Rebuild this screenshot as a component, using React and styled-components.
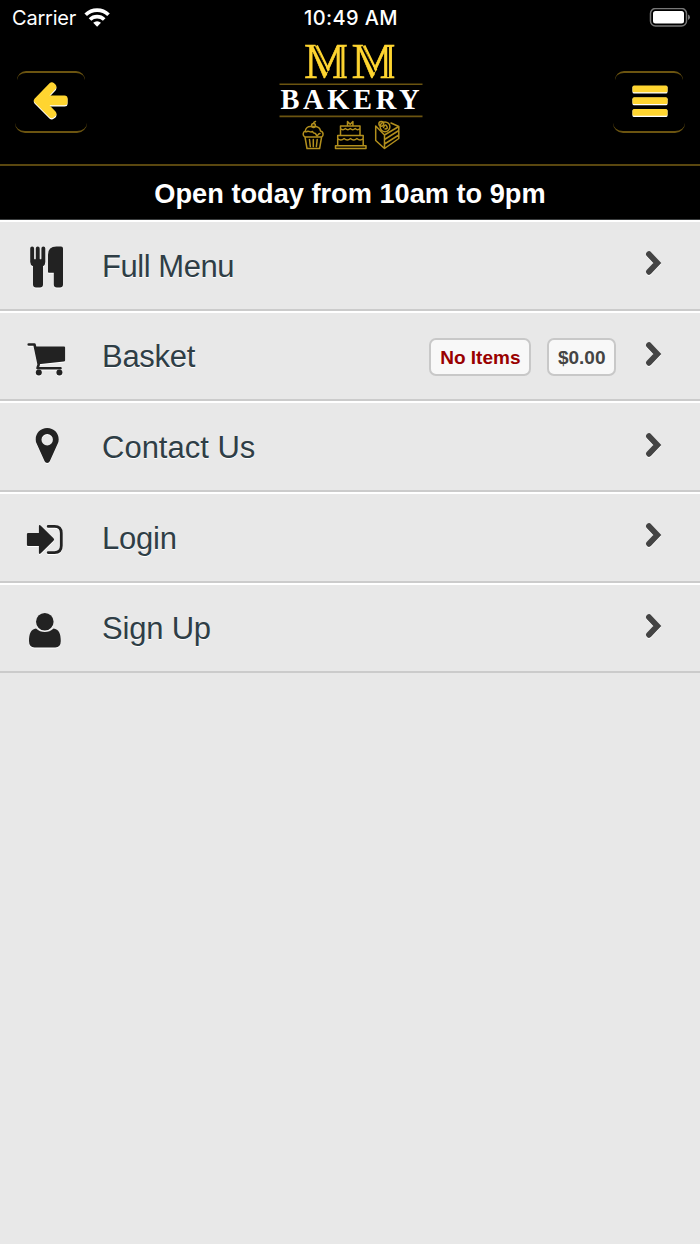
import React from 'react';
import styled, { createGlobalStyle } from 'styled-components';

const gold = '#ffd530';
const goldDark = '#6b5410';
const ink = '#222222';

const GlobalStyle = createGlobalStyle`
    body {
        margin: 0;
        background: #e8e8e8;
        font-family: "Liberation Sans", Arial, sans-serif;
    }
`;

const Page = styled.div`
    display: flex;
    flex-direction: column;
    min-height: 1244px;
    background: #e8e8e8;
`;

const StatusBar = styled.div`
    display: grid;
    grid-template-columns: 1fr auto 1fr;
    align-items: center;
    height: 36px;
    padding: 0 10px 0 12px;
    background: #000;
    color: #fff;
    font-family: Inter, sans-serif;
    font-size: 20px;
    line-height: 36px;
`;

const Carrier = styled.div`
    display: flex;
    align-items: center;
    gap: 8px;
    letter-spacing: -0.2px;
`;

const Clock = styled.div`
    font-weight: 500;
    letter-spacing: 0.4px;
`;

const Battery = styled.svg`
    justify-self: end;
`;

const Header = styled.header`
    display: flex;
    justify-content: space-between;
    box-sizing: border-box;
    height: 130px;
    padding: 0 15px;
    background: #000;
    border-bottom: 2px solid #5a470f;
`;

const HeaderButton = styled.button`
    position: relative;
    display: flex;
    align-items: center;
    justify-content: center;
    box-sizing: border-box;
    width: 72px;
    height: 62px;
    margin: 35px 0 0;
    padding: 0;
    background: transparent;
    border: 0 solid transparent;
    border-bottom: 2px solid ${goldDark};
    border-radius: 10px;

    &::before {
        content: '';
        position: absolute;
        top: 0;
        left: 2px;
        right: 2px;
        height: 16px;
        border-top: 2px solid ${goldDark};
        border-radius: 9px;
    }
`;

const Logo = styled.svg`
    display: block;
    margin-top: -8px;
`;

const Hours = styled.div`
    height: 54px;
    background: #000;
    border-bottom: 1px solid #3a3d3e;
    box-sizing: border-box;
    color: #fff;
    font-size: 27.2px;
    font-weight: bold;
    line-height: 55px;
    text-align: center;
`;

const Menu = styled.nav`
    display: flex;
    flex-direction: column;
`;

const Row = styled.a`
    display: flex;
    align-items: center;
    box-sizing: border-box;
    height: 90.67px;
    padding-right: 31px;
    border-top: 2px solid #fff;
    border-bottom: 2px solid #cbcbcb;
    color: #2f3e46;
    text-decoration: none;
`;

const RowIcon = styled.svg`
    flex: none;
    width: 48px;
    height: 52px;
    margin: 2px 32px 0 22px;
    fill: ${ink};
    filter: drop-shadow(0 1px 0 #fff);
`;

const Label = styled.span`
    flex: 1;
    font-size: 31px;
    line-height: 40px;
    padding-top: 3px;
    letter-spacing: ${props => props.$spacing || 0}px;
    text-shadow: 0 1px 0 #fff;
`;

const Badge = styled.span`
    box-sizing: border-box;
    height: 38px;
    margin: 2px 0 0 16px;
    padding: 0 ${props => props.$pad}px;
    background: #f8f8f8;
    border: 2px solid #c8c8c8;
    border-radius: 7px;
    color: ${props => props.$color};
    font-size: 19px;
    font-weight: bold;
    line-height: 35px;
`;

const Chevron = styled.svg`
    flex: none;
    margin: 0 6px 4px 29px;
    filter: drop-shadow(0 1px 0 #fff);
`;

const icons = {
  food: (
    <>
      <path d="M8.200 8.400q0-1.800 1.950-1.800t1.950 1.800v10q0 .9.850.9t.850-.9v-10q0-1.800 1.950-1.800t1.950 1.800v10q0 .9.850.9t.850-.9v-10q0-1.800 1.950-1.800t1.950 1.800v13.500q0 3-2.300 4.400v18.100q0 3-3 3h-4q-3 0-3-3V26.300q-2.800-1.400-2.800-4.400z" />
      <path d="M26 14.800q0-8.200 8.500-8.200h4.500q2 0 2 1.800v36q0 3-3 3h-3.200q-3 0-3-3V32.800h-5q-.8 0-.8-1z" />
    </>
  ),
  cart: (
    <>
      <path d="M6.700 13.500H12.500L16.700 33.500 15.500 37.200H38.500" fill="none" stroke={ink} strokeWidth="2.600" strokeLinecap="round" strokeLinejoin="round" />
      <path d="M12.500 15.500H42q1.100 0 1.100 1.100v12.600q0 1.200-1.200 1.300L16.500 33.300z" />
      <circle cx="16.800" cy="41.400" r="3" />
      <circle cx="37.400" cy="41.400" r="3" />
    </>
  ),
  pin: (
    <path fillRule="evenodd" d="M25.200 6C18.500 6 13.700 11 13.700 17.400q0 2.200.9 4.200l8 17.700q.8 1.700 2.600 1.700t2.600-1.700l8-17.700q.9-2 .9-4.200C36.700 11 31.900 6 25.200 6zm0 6.100a5.700 5.700 0 1 1 0 11.400 5.700 5.700 0 0 1 0-11.400z" />
  ),
  login: (
    <>
      <path d="M6.200 21H16.900V14.600q0-2.500 1.900-.8L31.500 26.200q1.300 1.300 0 2.600L18.800 41.200q-1.900 1.800-1.900-.7V34H6.200q-1.300 0-1.300-1.300V22.300q0-1.300 1.300-1.300z" />
      <path d="M26.200 14.400H32.500q6.800 0 6.800 6.800V33.800q0 6.800-6.800 6.800h-6.300" fill="none" stroke={ink} strokeWidth="2.800" strokeLinecap="round" />
    </>
  ),
  user: (
    <>
      <circle cx="22.800" cy="18.800" r="8.800" />
      <path d="M14 25.600q3.800 3.500 8.800 3.500t8.800-3.500c5.200.5 7.200 5.300 7.200 12.500q0 6.300-5.500 6.300H12.500Q7 44.400 7 38.100c0-7.200 2-12 7-12.500z" />
    </>
  ),
};

const backArrow = 'M3.500 19.800 18.500 4.200q2.400-2.100 4.600 0l1.400 1.300q1.900 2.300 0 4.600L18.500 16.500H33.500q3 0 3 2.500v4.800q0 2.500-3 2.500H18.500L24.500 32.500q2 2.300 0 4.600l-1.500 1.200q-2.300 1.800-4.600 0L3.500 23.300q-1.700-1.700 0-3.500z';

const Initial = ({ x }) => (
  <g transform={`translate(${x} 0)`}>
    <text x="0" y="41.500" fill={gold} stroke={gold} strokeWidth="0.600" fontFamily="Liberation Serif, serif" fontSize="51" textLength="44" lengthAdjust="spacingAndGlyphs">M</text>
    <g fill="none">
      <path d="M7.500 9.400 22.300 39.500M12.800 9.400 24.800 34.500M33.800 10V41M39.300 10V41" stroke={gold} strokeWidth="2.300" />
      {/* engraved lines inside the thick strokes */}
      <path d="M10.200 10.400 23 36M36.600 11V41" stroke="#000" strokeWidth="1.700" />
    </g>
  </g>
);

const BakeryLogo = () => (
  <Logo width="160" height="134" viewBox="0 -8 160 134">
    <Initial x={34} />
    <Initial x={81.500} />
    <path d="M9.500 48.200H152.500M9.500 80.400H152.500" stroke={goldDark} strokeWidth="1.600" />
    <text x="10.500" y="73.200" fill="#fff" fontFamily="Liberation Serif, serif" fontWeight="bold" fontSize="28.500" textLength="139">BAKERY</text>
    <g stroke="#b28f1d" strokeWidth="1.500" fill="none" strokeLinejoin="round" strokeLinecap="round">
      <path d="M35 101 37 112.500h12.600L51.600 101M39.500 103.500l.8 7M43.300 103.500v7M47.200 103.500l-.8 7M35 101c-2.500-1-2.500-5 .3-6 .3-3 3-4.500 5-4.500h5.500c3 .5 4.500 2.500 4.700 4.500 3.500 1 3 5 1.100 6zM35 101H51.600M36 96c3-2 4 1 6.500-.5 1.500 3.500 3 .5 3.500 3 1.500 2.500 2-1 4-1" />
      <circle cx="43.500" cy="89.500" r="1.900" />
      <path d="M43.500 87.600q0-1.700 2-2" />
      <path d="M65.500 109.800h30.500v2.700h-30.500zM67.700 109.500V99.500h25.500v10M70.500 99.500v-9.500h19.500v9.500M70.500 92.500q2.400 2.500 4.900 0 2.400 2.500 4.900 0 2.400 2.500 4.900 0 2.400 2.500 4.800 0M67.700 102.500q3.200 3 6.400 0 3.200 3 6.400 0 3.200 3 6.400 0 3.200 3 6.300 0M77.500 89.500v-4l2.700 2.700 2.700-2.700v4" />
      <path d="M105.700 90v14.500l8.800 8 14.300-10V90.500l-14.300 8.500v13.500M105.700 90l8.800 9M121 87l7.800 3.500M114.500 103.500l14.300-9M114.500 108l14.300-9" />
      <circle cx="115" cy="90.800" r="4.900" />
      <circle cx="111.300" cy="87.800" r="2.400" />
      <path d="M113.500 91.500q1.500-4 3.200-1.300t-1.700 2.800" />
    </g>
  </Logo>
);

const rows = [
  { icon: 'food', label: 'Full Menu', spacing: -0.45 },
  {
    icon: 'cart', label: 'Basket', spacing: -0.3, items: 'No Items', total: '$0.00',
  },
  { icon: 'pin', label: 'Contact Us' },
  { icon: 'login', label: 'Login', spacing: -0.2 },
  { icon: 'user', label: 'Sign Up', spacing: -0.2 },
];

const MenuRow = ({
  icon, label, spacing, items, total,
}) => (
  <Row>
    <RowIcon viewBox="0 0 48 52">{icons[icon]}</RowIcon>
    <Label $spacing={spacing}>{label}</Label>
    {items && <Badge $color="#990000" $pad={9}>{items}</Badge>}
    {total && <Badge $color="#444444" $pad={8.500}>{total}</Badge>}
    <Chevron width="18" height="26" viewBox="0 0 18 26">
      <path d="M4 4.200 12.300 13 4 21.800" fill="none" stroke="#444" strokeWidth="5.800" strokeLinecap="round" />
    </Chevron>
  </Row>
);

const App = () => (
  <Page>
    <GlobalStyle />
    <StatusBar>
      <Carrier>
        Carrier
        <svg width="27" height="20" viewBox="0 0 27 20">
          <g fill="none" stroke="#fff" strokeWidth="3.700">
            <path d="M1.700 6.800a16.300 16.300 0 0 1 22.800 0" />
            <path d="M6 11.500a10.200 10.200 0 0 1 14.200 0" />
          </g>
          <path d="M9.200 14.800a5.700 5.700 0 0 1 7.800 0l-3.900 4z" fill="#fff" />
        </svg>
      </Carrier>
      <Clock>10:49 AM</Clock>
      <Battery width="42" height="20" viewBox="0 0 42 20">
        <rect x="2.500" y="0.500" width="36" height="17.500" rx="5" fill="none" stroke="#777" strokeWidth="1.500" />
        <rect x="5" y="3" width="31" height="12.500" rx="2.500" fill="#fff" />
        <path d="M40 6.500q2 .8 2 2.700t-2 2.700z" fill="#777" />
      </Battery>
    </StatusBar>
    <Header>
      <HeaderButton aria-label="Back">
        <svg width="40" height="44" viewBox="0 0 40 44">
          <path d={backArrow} fill="#fff" transform="translate(0 1.300)" />
          <path d={backArrow} fill={gold} />
        </svg>
      </HeaderButton>
      <BakeryLogo />
      <HeaderButton aria-label="Menu">
        <svg width="38" height="34" viewBox="-2.500 0 38 34">
          <g fill="#fff">
            <rect x="0" y="2" width="35" height="7.500" rx="1.500" />
            <rect x="0" y="13.700" width="35" height="7.500" rx="1.500" />
            <rect x="0" y="25.400" width="35" height="7.500" rx="1.500" />
          </g>
          <g fill={gold}>
            <rect x="0" y="1.500" width="35" height="6.800" rx="1.500" />
            <rect x="0" y="13.200" width="35" height="6.800" rx="1.500" />
            <rect x="0" y="24.900" width="35" height="6.800" rx="1.500" />
          </g>
        </svg>
      </HeaderButton>
    </Header>
    <Hours>Open today from 10am to 9pm</Hours>
    <Menu>
      {rows.map(row => <MenuRow key={row.label} {...row} />)}
    </Menu>
  </Page>
);

export default App;
